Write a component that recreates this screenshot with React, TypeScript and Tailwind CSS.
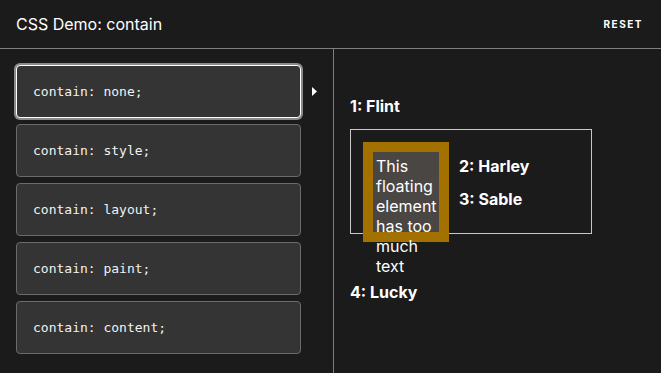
import * as React from "react";

// =============================================================================
// DATA
// =============================================================================

const choices = ["contain: none;", "contain: style;", "contain: layout;", "contain: paint;", "contain: content;"];

// =============================================================================
// COMPONENTS
// =============================================================================

/**
 * One option button in the left column
 */
const ChoiceButton: React.FC<{ label: string; selected: boolean }> = ({ label, selected }) => (
  <div className="flex items-center">
    <div
      className={
        selected
          ? "flex h-[53px] w-[285px] items-center rounded-[4px] border border-white bg-[#343434] pl-[16px] ring-2 ring-[#8a8a8a]"
          : "flex h-[53px] w-[285px] items-center rounded-[4px] border border-[#6b6b6b] bg-[#343434] pl-[16px]"
      }
    >
      <code className="font-['DejaVu_Sans_Mono',monospace] text-[13px] text-[#f2f2f2]">{label}</code>
    </div>
    {selected && (
      <svg className="ml-[11px]" width="5" height="9" viewBox="0 0 5 9">
        <path d="M0 0 L5 4.5 L0 9 Z" fill="#ffffff" />
      </svg>
    )}
  </div>
);

export default function App() {
  return (
    <div className="flex h-[373px] w-[661px] flex-col overflow-hidden bg-[#1b1b1b] font-['Inter',sans-serif] text-white">
      {/* Header */}
      <div className="flex h-[49px] shrink-0 items-center justify-between border-b border-[#7f7f7f] pl-4 pr-[18px]">
        <h1 className="text-[16px] font-normal">CSS Demo: contain</h1>
        <span className="text-[10px] font-bold tracking-[1.5px]">RESET</span>
      </div>

      {/* Body */}
      <div className="flex flex-1">
        {/* Choices */}
        <div className="flex w-[334px] shrink-0 flex-col gap-[6px] border-r border-[#7f7f7f] pl-4 pt-[16px]">
          {choices.map((c, i) => (
            <ChoiceButton key={c} label={c} selected={i === 0} />
          ))}
        </div>

        {/* Output */}
        <div className="flex-1 pl-4 pt-[47px] text-[16px] leading-[20px]">
          <p className="font-bold">1: Flint</p>
          <div className="mt-[13px] w-[242px] border border-[#c8c8c8] px-3 py-3">
            <div className="float-left mr-[10px] h-[100px] w-[86px] border-[10px] border-[#a27100] bg-[#4a4643] px-[3px] pt-[4px] font-normal">
              This floating element has too much text
            </div>
            <p className="mt-[14px] font-bold">2: Harley</p>
            <p className="mb-3 mt-[13px] font-bold">3: Sable</p>
          </div>
          <p className="mt-[48px] font-bold">4: Lucky</p>
        </div>
      </div>
    </div>
  );
}
